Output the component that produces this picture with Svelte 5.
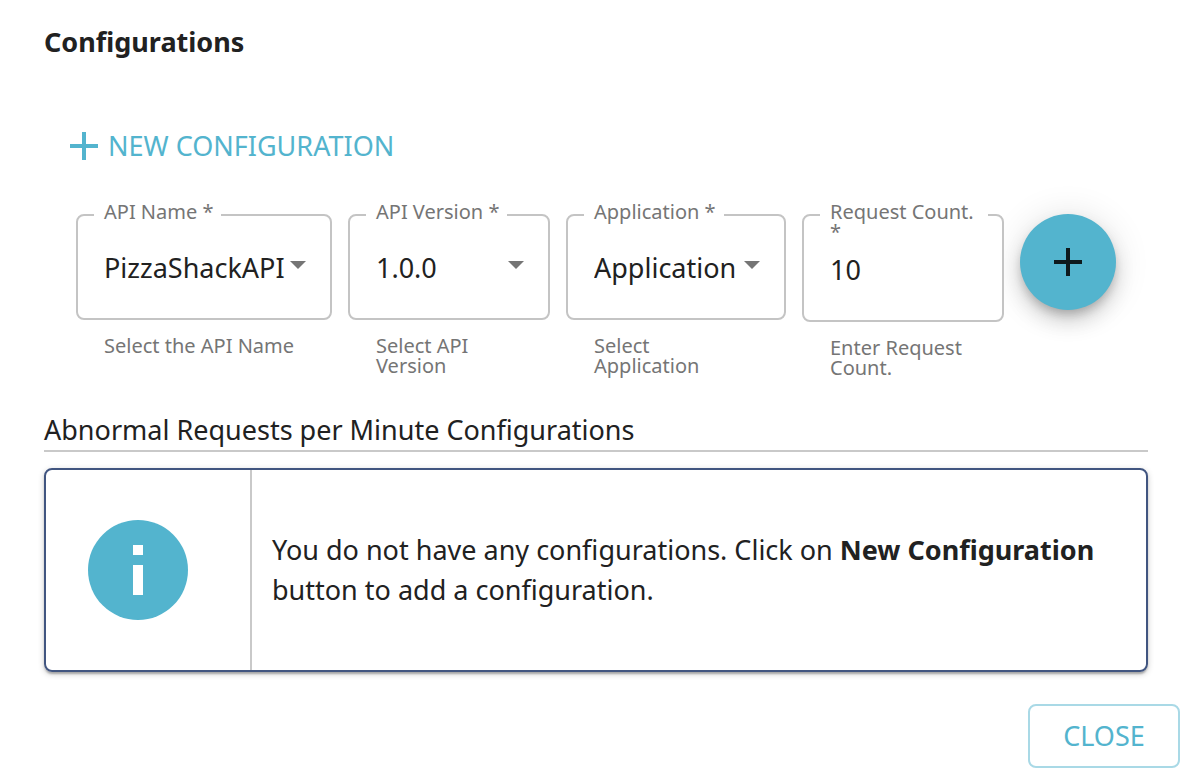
<script>
  const fields = [
    { id: 'api-name', label: 'API Name', value: 'PizzaShackAPI', help: 'Select the API Name' },
    { id: 'api-version', label: 'API Version', value: '1.0.0', help: 'Select API Version' },
    { id: 'application', label: 'Application', value: 'Application', help: 'Select Application' }
  ];
</script>

<main>
  <h1>Configurations</h1>

  <button class="new" type="button">
    <svg width="28" height="28" viewBox="0 0 28 28" aria-hidden="true"><path d="M12 0h4v12h12v4H16v12h-4V16H0v-4h12z" /></svg>
    NEW CONFIGURATION
  </button>

  <form class="fields" onsubmit={(e) => e.preventDefault()}>
    {#each fields as f}
      <div class="field">
        <div class="control">
          <label for={f.id}>{f.label} *</label>
          <select id={f.id} aria-describedby="{f.id}-help">
            <option>{f.value}</option>
          </select>
          <svg class="arrow" width="16" height="8" viewBox="0 0 16 8" aria-hidden="true"><path d="M0 0h16L8 8z" /></svg>
        </div>
        <p class="help" id="{f.id}-help">{f.help}</p>
      </div>
    {/each}
    <div class="field">
      <div class="control">
        <label for="count">Request Count. *</label>
        <input id="count" type="text" inputmode="numeric" value="10" aria-describedby="count-help" />
      </div>
      <p class="help" id="count-help">Enter Request Count.</p>
    </div>
    <button class="fab" type="submit" aria-label="Add">
      <svg width="28" height="28" viewBox="0 0 28 28" aria-hidden="true"><path d="M12 0h4v12h12v4H16v12h-4V16H0v-4h12z" /></svg>
    </button>
  </form>

  <h2>Abnormal Requests per Minute Configurations</h2>

  <section class="info">
    <div class="info-icon">
      <svg width="100" height="100" viewBox="0 0 100 100" aria-hidden="true">
        <circle cx="50" cy="50" r="50" />
        <path fill="#fff" d="M45 25h10v10H45zM45 45h10v30H45z" />
      </svg>
    </div>
    <p>You do not have any configurations. Click on <strong>New Configuration</strong> button to add a configuration.</p>
  </section>
</main>

<footer>
  <button class="close" type="button">CLOSE</button>
</footer>

<style>
  :global(body) {
    margin: 0;
    background: #fff;
    color: #212121;
    font-family: "Noto Sans", "Open Sans", sans-serif;
    font-size: 27px;
  }
  main {
    padding: 22px 44px 0;
  }
  h1, h2, p {
    margin: 0;
    font-size: 27px;
    line-height: 40px;
    font-weight: 400;
  }
  h1 {
    font-weight: 700;
  }
  button, select, input {
    font: inherit;
    color: inherit;
    box-sizing: border-box;
    margin: 0;
    cursor: pointer;
  }
  .new {
    display: flex;
    align-items: center;
    gap: 10px;
    margin: 58px 0 0 26px;
    padding: 0;
    border: 0;
    background: none;
    color: #53b4ce;
    line-height: 52px;
  }
  svg {
    display: block;
    fill: currentColor;
  }
  .fields {
    display: grid;
    grid-template-columns: minmax(0, 256fr) minmax(0, 202fr) minmax(0, 220fr) minmax(0, 202fr) 96px;
    gap: 16px;
    align-items: start;
    margin: 42px 32px 0;
  }
  .control {
    position: relative;
  }
  label {
    position: absolute;
    top: -12px;
    left: 18px;
    box-sizing: border-box;
    max-width: 168px;
    padding: 0 8px 0 10px;
    background: #fff;
    color: #757575;
    font-size: 20px;
    line-height: 20px;
  }
  select, input {
    display: block;
    width: 100%;
    height: 106px;
    padding: 0 26px;
    border: 2px solid #c4c4c4;
    border-radius: 8px;
    background: #fff;
    appearance: none;
  }
  input {
    height: 108px;
    padding-top: 2px;
    cursor: text;
  }
  .arrow {
    position: absolute;
    top: 47px;
    right: 26px;
    color: #757575;
    pointer-events: none;
  }
  .help {
    margin: 16px 28px 0;
    color: #757575;
    font-size: 20px;
    line-height: 20px;
  }
  .fab {
    display: grid;
    place-items: center;
    width: 96px;
    height: 96px;
    padding: 0;
    border: 0;
    border-radius: 50%;
    background: #53b4ce;
    color: #0e1a1d;
    box-shadow: 0 6px 10px -2px rgba(0, 0, 0, 0.2), 0 12px 20px rgba(0, 0, 0, 0.14), 0 2px 36px rgba(0, 0, 0, 0.12);
  }
  h2 {
    margin-top: 32px;
    border-bottom: 2px solid #c9c9c9;
  }
  .info {
    display: flex;
    min-height: 200px;
    margin-top: 16px;
    border: 2px solid #415580;
    border-radius: 8px;
    box-shadow: 0 2px 6px rgba(0, 0, 0, 0.2), 0 2px 2px rgba(0, 0, 0, 0.14), 0 4px 2px -2px rgba(0, 0, 0, 0.12);
  }
  .info-icon {
    display: flex;
    align-items: center;
    padding: 0 62px 0 42px;
    border-right: 2px solid #c9c9c9;
    color: #53b4ce;
  }
  .info p {
    align-self: center;
    padding: 0 20px;
  }
  footer {
    display: flex;
    justify-content: flex-end;
    padding: 32px 12px 10px;
  }
  .close {
    min-width: 152px;
    padding: 10px 32px;
    border: 2px solid #a9d9e6;
    border-radius: 8px;
    background: #fff;
    color: #53b4ce;
    line-height: 40px;
  }
</style>
